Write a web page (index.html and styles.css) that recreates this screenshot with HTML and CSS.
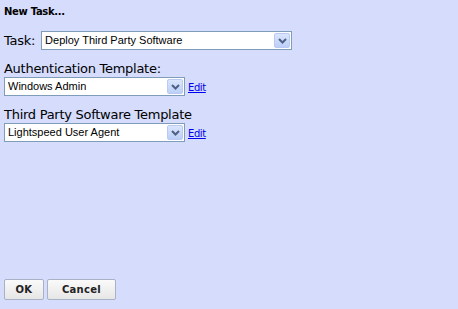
FILE: index.html
```html
<!DOCTYPE html>
<html>
<head>
<meta charset="utf-8">
<link rel="stylesheet" href="styles.css">
</head>
<body>
<div class="page">
  <div class="title">New Task...</div>
  <div class="task-row">
    <span class="label">Task:</span>
    <div class="select wide"><span class="value">Deploy Third Party Software</span><span class="arrow"><svg width="9" height="6" viewBox="0 0 9 6"><path d="M1 1 L4.5 4.5 L8 1" fill="none" stroke="#4d6185" stroke-width="2"/></svg></span></div>
  </div>
  <div class="field">
    <div class="label">Authentication Template:</div>
    <div class="line">
      <div class="select narrow"><span class="value">Windows Admin</span><span class="arrow"><svg width="9" height="6" viewBox="0 0 9 6"><path d="M1 1 L4.5 4.5 L8 1" fill="none" stroke="#4d6185" stroke-width="2"/></svg></span></div>
      <a class="edit" href="#">Edit</a>
    </div>
  </div>
  <div class="field">
    <div class="label">Third Party Software Template</div>
    <div class="line">
      <div class="select narrow"><span class="value">Lightspeed User Agent</span><span class="arrow"><svg width="9" height="6" viewBox="0 0 9 6"><path d="M1 1 L4.5 4.5 L8 1" fill="none" stroke="#4d6185" stroke-width="2"/></svg></span></div>
      <a class="edit" href="#">Edit</a>
    </div>
  </div>
  <div class="spacer"></div>
  <div class="buttons">
    <button class="btn ok">OK</button>
    <button class="btn cancel">Cancel</button>
  </div>
</div>
</body>
</html>
```
FILE: styles.css
```css
html, body {
  margin: 0;
  padding: 0;
  background: #d5dcfc;
}
.page {
  width: 458px;
  height: 309px;
  box-sizing: border-box;
  padding: 5px 4px 9px 4px;
  display: flex;
  flex-direction: column;
  font-family: "Liberation Sans", Arial, sans-serif;
  color: #000;
}
.title {
  font-family: "DejaVu Sans", sans-serif;
  font-weight: bold;
  font-size: 10px;
  line-height: 13px;
  letter-spacing: -0.3px;
}
.task-row {
  margin-top: 13px;
  display: flex;
  align-items: center;
  gap: 6px;
}
.label {
  font-family: "DejaVu Sans", sans-serif;
  font-size: 13px;
  letter-spacing: -0.27px;
  line-height: 17px;
}
.task-row .label { line-height: 15px; }
.select {
  box-sizing: border-box;
  height: 19px;
  border: 1px solid #7f9db9;
  background: #fff;
  display: flex;
  align-items: center;
  justify-content: space-between;
  padding: 0 1px 0 3px;
  font-size: 11px;
}
.select.wide { width: 251px; }
.select.narrow { width: 181px; }
.value { line-height: 15px; }
.arrow {
  box-sizing: border-box;
  width: 16px;
  height: 15px;
  border: 1px solid #b9cbf2;
  border-radius: 2px;
  background: linear-gradient(#dbe6fd, #bccff8);
  display: flex;
  align-items: center;
  justify-content: center;
}
.field {
  margin-top: 10px;
}
.line {
  display: flex;
  align-items: flex-start;
  gap: 3px;
}
.edit {
  font-family: "DejaVu Sans", sans-serif;
  font-size: 10px;
  letter-spacing: -0.4px;
  line-height: 12px;
  color: #0000ee;
  text-decoration: underline;
  margin-top: 5px;
}
.spacer { flex: 1; }
.buttons {
  display: flex;
  gap: 3px;
}
.btn {
  height: 21px;
  border: 1px solid #a9b2c4;
  border-radius: 2px;
  background: linear-gradient(#fafafa, #e6e6e6);
  font-family: "DejaVu Sans", sans-serif;
  font-weight: bold;
  font-size: 10px;
  color: #222;
  padding: 0;
  letter-spacing: 0.3px;
}
.btn.ok { width: 40px; }
.btn.cancel { width: 69px; }
```
